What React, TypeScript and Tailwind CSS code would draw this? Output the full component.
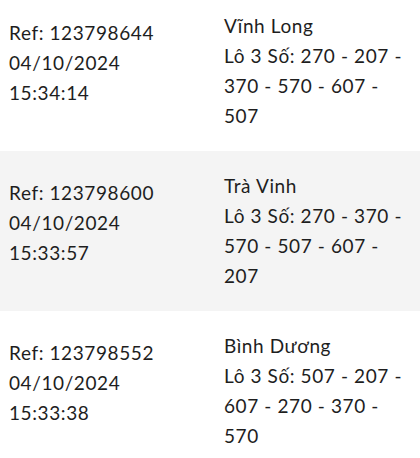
const rows = [
  {
    ref: '123798644',
    date: '04/10/2024',
    time: '15:34:14',
    place: 'Vĩnh Long',
    nums: 'Lô 3 Số: 270 - 207 - 370 - 570 - 607 - 507',
  },
  {
    ref: '123798600',
    date: '04/10/2024',
    time: '15:33:57',
    place: 'Trà Vinh',
    nums: 'Lô 3 Số: 270 - 370 - 570 - 507 - 607 - 207',
  },
  {
    ref: '123798552',
    date: '04/10/2024',
    time: '15:33:38',
    place: 'Bình Dương',
    nums: 'Lô 3 Số: 507 - 207 - 607 - 270 - 370 - 570',
  },
]

export default function App() {
  return (
    <div className="h-[458px] w-[420px] overflow-hidden bg-white text-[19px] leading-[30px] tracking-[0.6px] text-[#1e1e1e] font-['Lato',sans-serif]">
      <div className="-mt-[9px]">
        {rows.map((r, i) => (
          <div
            key={r.ref}
            className={`flex py-[20px] ${i % 2 === 1 ? 'bg-[#f4f4f4]' : 'bg-white'}`}
          >
            <div className="w-[224px] shrink-0 pl-[9px] pt-[7px]">
              <div>Ref: {r.ref}</div>
              <div>{r.date}</div>
              <div>{r.time}</div>
            </div>
            <div className="w-[186px] shrink-0">
              <div>{r.place}</div>
              <div>{r.nums}</div>
            </div>
          </div>
        ))}
      </div>
    </div>
  )
}
